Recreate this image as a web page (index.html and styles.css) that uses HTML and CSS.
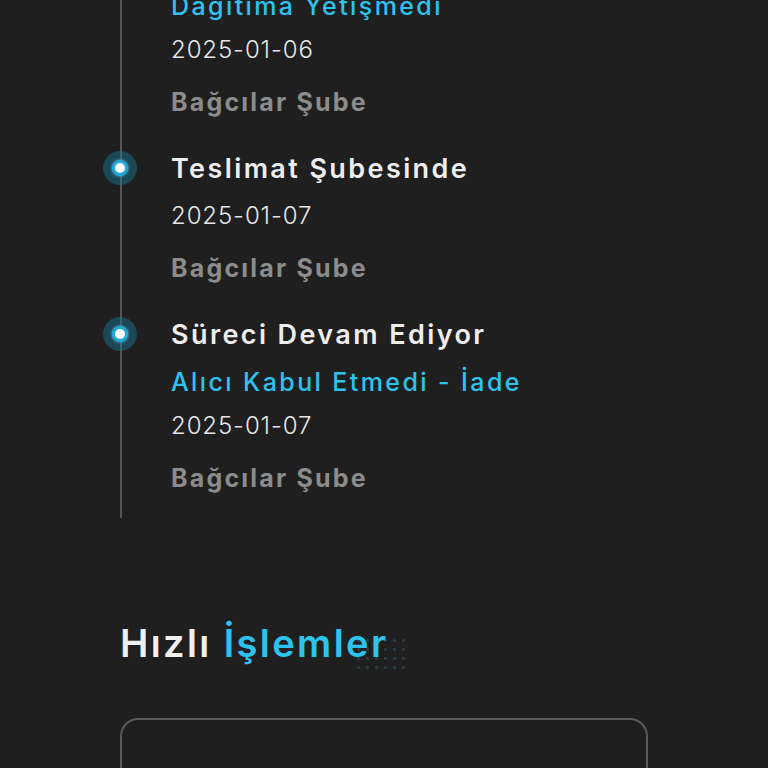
FILE: index.html
```html
<!DOCTYPE html>
<html lang="tr">
<head>
<meta charset="utf-8">
<link rel="stylesheet" href="styles.css">
</head>
<body>
<div class="page">
  <div class="timeline">
    <div class="item">
      <span class="dot"></span>
      <div class="title">Dağıtıma Çıktı</div>
      <div class="sub">Dağıtıma Yetişmedi</div>
      <div class="date">2025-01-06</div>
      <div class="branch">Bağcılar Şube</div>
    </div>
    <div class="item">
      <span class="dot"></span>
      <div class="title">Teslimat Şubesinde</div>
      <div class="date">2025-01-07</div>
      <div class="branch">Bağcılar Şube</div>
    </div>
    <div class="item">
      <span class="dot"></span>
      <div class="title">Süreci Devam Ediyor</div>
      <div class="sub">Alıcı Kabul Etmedi - İade</div>
      <div class="date">2025-01-07</div>
      <div class="branch">Bağcılar Şube</div>
    </div>
  </div>

  <h2 class="heading">Hızlı <span class="accent">İşlemler</span></h2>

  <div class="card"></div>
</div>
</body>
</html>
```
FILE: styles.css
```css
html, body {
  margin: 0;
  padding: 0;
  background: #1f1f1f;
  overflow: hidden;
}
body {
  font-family: Inter, "Noto Sans", sans-serif;
  color: #eeeeee;
}
.page {
  padding-left: 120px;
  width: 528px;
}
.timeline {
  margin-top: -63px;
  border-left: 2px solid #555555;
  padding-left: 49px;
  padding-bottom: 18px;
  display: flex;
  flex-direction: column;
  gap: 23px;
}
.item {
  position: relative;
}
.dot {
  position: absolute;
  left: -68px;
  top: 4px;
  width: 34px;
  height: 34px;
  border-radius: 50%;
  background: rgba(22, 120, 155, 0.45);
  display: flex;
  align-items: center;
  justify-content: center;
}
.dot::after {
  content: "";
  width: 10px;
  height: 10px;
  border-radius: 50%;
  background: #ffffff;
  border: 3px solid #1ea8d6;
  box-shadow: 0 0 3px rgba(120, 220, 255, 0.8);
}
.title, .sub, .date, .branch {
  line-height: 44px;
  white-space: nowrap;
}
.title {
  font-size: 27px;
  font-weight: 600;
  color: #eeeeee;
  margin-bottom: 3px;
  letter-spacing: 2.4px;
}
.sub {
  font-size: 25px;
  font-weight: 500;
  color: #2ec3ee;
  letter-spacing: 2.4px;
}
.date {
  font-size: 24px;
  font-weight: 300;
  color: #e6e6e6;
  margin-bottom: 8px;
  letter-spacing: 0.9px;
}
.branch {
  font-size: 25px;
  font-weight: 700;
  color: #8c8c8c;
  letter-spacing: 2.2px;
}
.heading {
  position: relative;
  margin: 100px 0 50px 0;
  font-size: 38px;
  line-height: 50px;
  font-weight: 600;
  color: #f0f0f0;
  letter-spacing: 2.4px;
}
.heading::after {
  content: "";
  position: absolute;
  left: 234px;
  top: 18px;
  width: 56px;
  height: 33px;
  background-image: radial-gradient(circle, rgba(55, 100, 130, 0.4) 1.3px, transparent 1.6px);
  background-size: 9px 9px;
  z-index: 0;
}
.accent {
  position: relative;
  z-index: 1;
  color: #2ec3ee;
}
.card {
  width: 524px;
  height: 200px;
  border: 2px solid #5a5a5a;
  border-radius: 18px;
}
```
